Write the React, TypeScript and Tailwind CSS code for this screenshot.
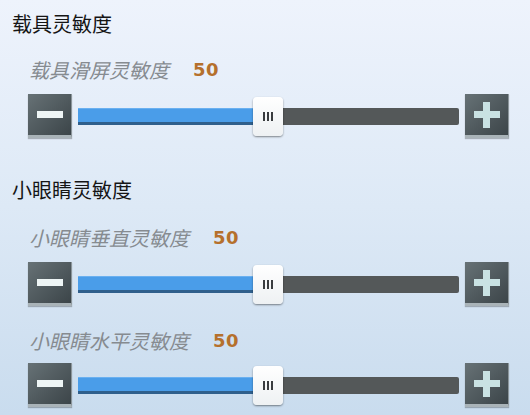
const CJK = "font-['Noto_Sans_CJK_SC','Noto_Sans',sans-serif]";

export default function App() {
  return (
    <div
      className={`w-[530px] h-[415px] overflow-hidden bg-gradient-to-b from-[#eef3fc] via-[#dde9f6] to-[#c9dcee] ${CJK} flex flex-col`}
    >
      <SectionTitle className="mt-[10px]">载具灵敏度</SectionTitle>
      <Label className="mt-[18px]" text="载具滑屏灵敏度" value={50} />
      <SliderRow className="mt-[10px]" value={50} />

      <SectionTitle className="mt-[38px]">小眼睛灵敏度</SectionTitle>
      <Label className="mt-[20px]" text="小眼睛垂直灵敏度" value={50} />
      <SliderRow className="mt-[10px]" value={50} />

      <Label className="mt-[21px]" text="小眼睛水平灵敏度" value={50} />
      <SliderRow className="mt-[8px]" value={50} />
    </div>
  );
}

function SectionTitle({
  children,
  className,
}: {
  children: React.ReactNode;
  className?: string;
}) {
  return (
    <h2
      className={`pl-[12px] text-[20px] leading-[28px] text-[#151515] font-normal ${className ?? ""}`}
    >
      {children}
    </h2>
  );
}

function Label({
  text,
  value,
  className,
}: {
  text: string;
  value: number;
  className?: string;
}) {
  return (
    <div className={`flex items-center pl-[29px] h-[28px] ${className ?? ""}`}>
      <span className="text-[20px] leading-[28px] italic text-[#868b90]">
        {text}
      </span>
      <span className="ml-[24px] text-[18px] leading-[28px] font-bold text-[#b5702c] font-['DejaVu_Sans',sans-serif] tracking-[0.5px]">
        {value}
      </span>
    </div>
  );
}

function SliderRow({
  value,
  className,
}: {
  value: number;
  className?: string;
}) {
  // track is 381px wide; 50 sits at the thumb's centre
  const fill = Math.round((value / 100) * 380);
  return (
    <div className={`flex items-center h-[44px] pl-[28px] ${className ?? ""}`}>
      <StepButton kind="minus" />
      <div className="relative ml-[6px] w-[381px] h-[17px] flex">
        <div
          className="h-full bg-[#4a9de9] border-b-[3px] border-[#2f5f8c] border-t border-t-[#6ab0f0]"
          style={{ width: fill }}
        />
        <div className="h-full flex-1 bg-[#545859] rounded-r-[2px]" />
        <div
          className="absolute top-[-11px] w-[30px] h-[39px] rounded-[4px] bg-gradient-to-b from-white to-[#eef1f3] shadow-[0_1px_2px_rgba(0,0,0,0.45)] flex items-center justify-center gap-[2px]"
          style={{ left: fill - 15 }}
        >
          <span className="w-[2px] h-[9px] bg-[#3a3d40]" />
          <span className="w-[2px] h-[9px] bg-[#3a3d40]" />
          <span className="w-[2px] h-[9px] bg-[#3a3d40]" />
        </div>
      </div>
      <div className="ml-[6px]">
        <StepButton kind="plus" />
      </div>
    </div>
  );
}

function StepButton({ kind }: { kind: "minus" | "plus" }) {
  return (
    <div className="relative w-[44px] h-[44px] bg-gradient-to-br from-[#677276] to-[#3c4549] border-b-[3px] border-b-[#a9b3b8] border-r border-r-[#8c969b] shadow-[0_1px_1px_rgba(0,0,0,0.25)] flex items-center justify-center">
      {kind === "minus" ? (
        <div className="w-[26px] h-[7px] bg-[#eef5f5]" />
      ) : (
        <div className="relative w-[26px] h-[26px]">
          <div className="absolute left-0 top-[9.5px] w-[26px] h-[7px] bg-[#c9e2e3]" />
          <div className="absolute top-0 left-[9.5px] w-[7px] h-[26px] bg-[#c9e2e3]" />
        </div>
      )}
    </div>
  );
}
